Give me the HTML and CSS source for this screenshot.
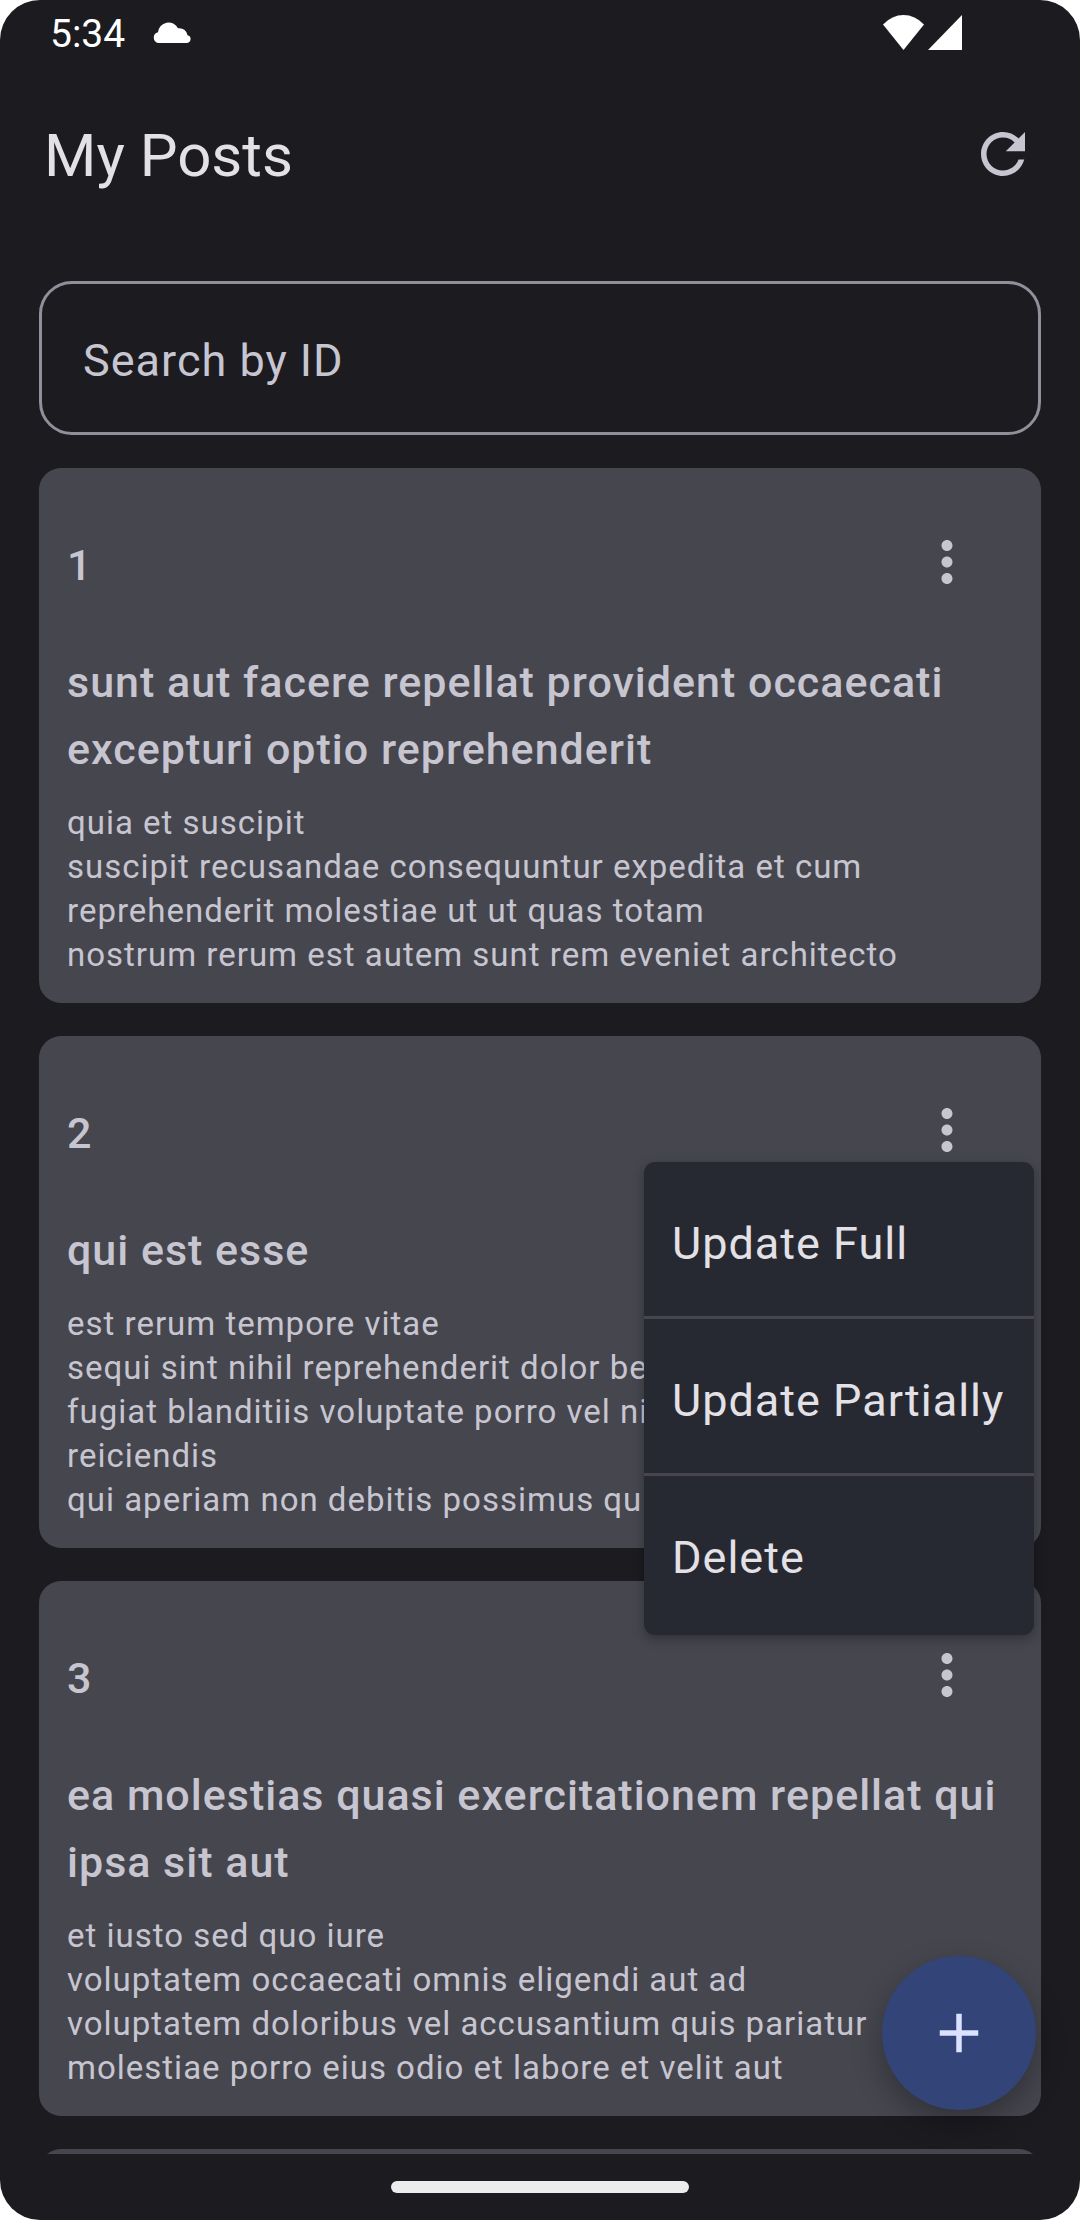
FILE: index.html
```html
<!DOCTYPE html>
<html lang="en">
<head>
<meta charset="utf-8">
<meta name="viewport" content="width=device-width, initial-scale=1">
<title>My Posts</title>
<link rel="stylesheet" href="styles.css">
</head>
<body>
<div class="screen">
  <div class="status-bar">
    <span class="clock">5:34</span>
    <svg class="cloud" viewBox="0 0 38 22" aria-hidden="true"><path d="M5.500 22A5.500 5.500 0 0 1 5 11.200A10.600 10.600 0 0 1 25 7.300A8 8 0 0 1 34.500 14.300A3.900 3.900 0 0 1 34 22Z"/></svg>
    <div class="signals">
      <svg class="wifi" viewBox="0 0 41 35" aria-hidden="true"><path d="M20.500 35L0 9.500Q9 0 20.500 0T41 9.500Z"/></svg>
      <svg class="cell" viewBox="0 0 34 35" aria-hidden="true"><path d="M0 35L34 0V35Z"/></svg>
    </div>
  </div>

  <header class="app-bar">
    <h1 class="app-title">My Posts</h1>
    <button class="icon-button" type="button" aria-label="Refresh">
      <svg class="icon" viewBox="0 0 24 24" aria-hidden="true"><path d="M17.65 6.35C16.2 4.9 14.210 4 12 4c-4.420 0-7.990 3.580-7.990 8s3.570 8 7.990 8c3.730 0 6.840-2.550 7.730-6h-2.080c-.82 2.330-3.040 4-5.650 4-3.310 0-6-2.690-6-6s2.690-6 6-6c1.660 0 3.140.69 4.220 1.780L13 11h7V4l-2.350 2.350z"/></svg>
    </button>
  </header>

  <main class="content">
    <input class="search" type="text" placeholder="Search by ID" aria-label="Search by ID">

    <article class="card">
      <div class="card-head">
        <span class="card-id">1</span>
        <button class="icon-button" type="button" aria-label="Options for post 1">
          <svg class="icon" viewBox="0 0 24 24" aria-hidden="true"><path d="M12 8c1.100 0 2-.9 2-2s-.9-2-2-2-2 .9-2 2 .9 2 2 2zm0 2c-1.100 0-2 .9-2 2s.9 2 2 2 2-.9 2-2-.9-2-2-2zm0 6c-1.100 0-2 .9-2 2s.9 2 2 2 2-.9 2-2-.9-2-2-2z"/></svg>
        </button>
      </div>
      <h2 class="card-title">sunt aut facere repellat provident occaecati excepturi optio reprehenderit</h2>
      <p class="card-body">quia et suscipit
suscipit recusandae consequuntur expedita et cum
reprehenderit molestiae ut ut quas totam
nostrum rerum est autem sunt rem eveniet architecto</p>
    </article>

    <article class="card">
      <div class="card-head">
        <span class="card-id">2</span>
        <div class="menu-anchor">
          <button class="icon-button" type="button" aria-label="Options for post 2" aria-expanded="true">
            <svg class="icon" viewBox="0 0 24 24" aria-hidden="true"><path d="M12 8c1.100 0 2-.9 2-2s-.9-2-2-2-2 .9-2 2 .9 2 2 2zm0 2c-1.100 0-2 .9-2 2s.9 2 2 2 2-.9 2-2-.9-2-2-2zm0 6c-1.100 0-2 .9-2 2s.9 2 2 2 2-.9 2-2-.9-2-2-2z"/></svg>
          </button>
          <div class="menu" role="menu">
            <button class="menu-item" type="button" role="menuitem">Update Full</button>
            <button class="menu-item" type="button" role="menuitem">Update Partially</button>
            <button class="menu-item" type="button" role="menuitem">Delete</button>
          </div>
        </div>
      </div>
      <h2 class="card-title">qui est esse</h2>
      <p class="card-body">est rerum tempore vitae
sequi sint nihil reprehenderit dolor beatae ea dolores neque
fugiat blanditiis voluptate porro vel nihil molestiae ut reiciendis
qui aperiam non debitis possimus qui neque nisi nulla</p>
    </article>

    <article class="card">
      <div class="card-head">
        <span class="card-id">3</span>
        <button class="icon-button" type="button" aria-label="Options for post 3">
          <svg class="icon" viewBox="0 0 24 24" aria-hidden="true"><path d="M12 8c1.100 0 2-.9 2-2s-.9-2-2-2-2 .9-2 2 .9 2 2 2zm0 2c-1.100 0-2 .9-2 2s.9 2 2 2 2-.9 2-2-.9-2-2-2zm0 6c-1.100 0-2 .9-2 2s.9 2 2 2 2-.9 2-2-.9-2-2-2z"/></svg>
        </button>
      </div>
      <h2 class="card-title">ea molestias quasi exercitationem repellat qui ipsa sit aut</h2>
      <p class="card-body">et iusto sed quo iure
voluptatem occaecati omnis eligendi aut ad
voluptatem doloribus vel accusantium quis pariatur
molestiae porro eius odio et labore et velit aut</p>
    </article>

    <div class="card"></div>

    <button class="fab" type="button" aria-label="Add post">
      <svg class="icon" viewBox="0 0 24 24" aria-hidden="true"><path d="M19 13h-6v6h-2v-6H5v-2h6V5h2v6h6v2z"/></svg>
    </button>
  </main>

  <div class="nav-bar"><div class="nav-handle"></div></div>
</div>
</body>
</html>
```
FILE: styles.css
```css
:root {
  --surface: #1b1b20;
  --surface-variant: #46464f;
  --on-surface: #e4e1e6;
  --on-surface-variant: #c7c5d0;
  --outline: #90909a;
}

* {
  box-sizing: border-box;
}

body {
  margin: 0;
  background: #fff;
  font-family: Roboto, "Noto Sans", sans-serif;
}

button {
  border: 0;
  background: none;
  font: inherit;
  color: inherit;
}

.screen {
  display: flex;
  flex-direction: column;
  height: 100vh;
  overflow: hidden;
  border-radius: 40px;
  background: var(--surface);
  color: var(--on-surface);
}

.status-bar {
  display: flex;
  flex: none;
  align-items: center;
  height: 66px;
  padding: 0 118px 2px 50px;
  color: #fff;
  fill: #fff;
}

.clock {
  padding-top: 4px;
  font-size: 39px;
  line-height: 60px;
}

.cloud {
  width: 38px;
  height: 22px;
  margin-left: 28px;
}

.signals {
  display: flex;
  gap: 4px;
  margin-left: auto;
}

.wifi {
  width: 41px;
  height: 35px;
}

.cell {
  width: 34px;
  height: 35px;
}

.app-bar {
  display: flex;
  flex: none;
  align-items: center;
  justify-content: space-between;
  height: 176px;
  padding: 0 11px 0 44px;
}

.app-title {
  margin: 0;
  padding-top: 3px;
  font-size: 60px;
  font-weight: 400;
  line-height: 77px;
}

.icon-button {
  display: grid;
  place-items: center;
  width: 132px;
  height: 132px;
  padding: 0;
  border-radius: 50%;
}

.icon {
  display: block;
  width: 66px;
  height: 66px;
  fill: var(--on-surface-variant);
}

.content {
  position: relative;
  display: flex;
  flex: 1;
  flex-direction: column;
  gap: 33px;
  min-height: 0;
  overflow: hidden;
  padding: 39px 39px 0;
}

.search {
  flex: none;
  width: 100%;
  height: 154px;
  padding: 4px 41px 0;
  border: 3px solid var(--outline);
  border-radius: 33px;
  background: none;
  color: var(--on-surface);
  font-family: inherit;
  font-size: 45px;
  letter-spacing: 1px;
}

.search::placeholder {
  color: var(--on-surface-variant);
  opacity: 1;
}

.card {
  flex: none;
  padding: 28px 28px 26px;
  border-radius: 22px;
  background: var(--surface-variant);
  color: var(--on-surface-variant);
}

.card-head {
  display: flex;
  align-items: center;
  justify-content: space-between;
}

.card-id,
.card-title {
  font-size: 43px;
  font-weight: 500;
  line-height: 67px;
  letter-spacing: 1px;
}

.card-id {
  padding-top: 6px;
}

.card-title {
  margin: 21px 0 18px;
}

.card-body {
  margin: 0;
  font-size: 33px;
  line-height: 44px;
  letter-spacing: 1px;
  white-space: pre-line;
}

.menu-anchor {
  position: relative;
}

.menu {
  position: absolute;
  top: 98px;
  right: -21px;
  z-index: 1;
  width: 390px;
  overflow: hidden;
  border-radius: 11px;
  background: #272932;
  box-shadow: 0 4px 12px rgba(0, 0, 0, 0.3);
}

.menu-item {
  display: block;
  width: 100%;
  padding: 49px 28px 39px;
  border-bottom: 3px solid #49454f;
  color: var(--on-surface);
  font-size: 45px;
  line-height: 66px;
  letter-spacing: 1px;
  text-align: left;
  white-space: nowrap;
}

.menu-item:last-child {
  padding-bottom: 44px;
  border-bottom: 0;
}

.fab {
  position: absolute;
  right: 44px;
  bottom: 44px;
  display: grid;
  place-items: center;
  width: 154px;
  height: 154px;
  padding: 0;
  border-radius: 50%;
  background: #324478;
  box-shadow: 0 12px 30px rgba(0, 0, 0, 0.3);
}

.fab .icon {
  fill: #dce1ff;
}

.nav-bar {
  display: grid;
  flex: none;
  place-items: center;
  height: 66px;
}

.nav-handle {
  width: 298px;
  height: 12px;
  border-radius: 6px;
  background: #ececec;
}
```
